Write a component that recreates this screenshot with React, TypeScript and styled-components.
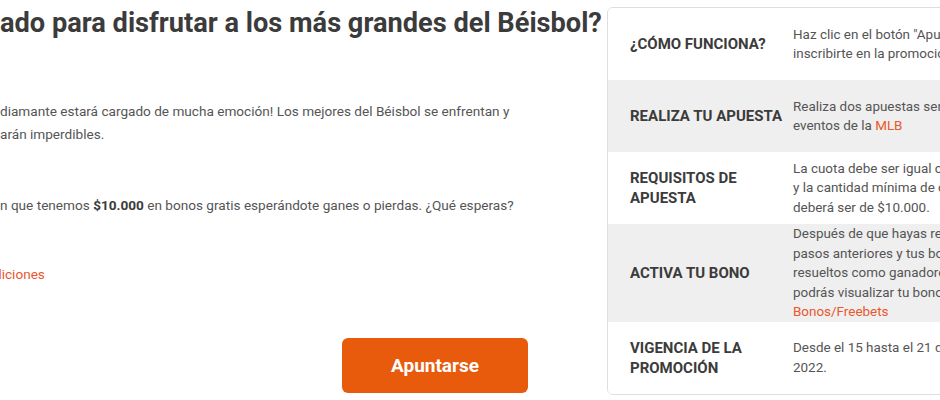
import React from "react";
import styled, { createGlobalStyle } from "styled-components";

const Global = createGlobalStyle`
  html, body {
    margin: 0;
    padding: 0;
    background: #ffffff;
    overflow: hidden;
  }
  body {
    font-family: Roboto, "Liberation Sans", Arial, sans-serif;
    width: 940px;
    height: 400px;
  }
`;

const Page = styled.div`
  display: flex;
  align-items: flex-start;
  gap: 7px;
  width: 1200px;
`;

const Content = styled.div`
  width: 600px;
  flex: none;
  display: flex;
  flex-direction: column;
  padding-top: 9px;
`;

const Title = styled.h1`
  margin: 0;
  font-size: 27.2px;
  line-height: 29px;
  font-weight: 700;
  color: #3b3b3b;
  white-space: nowrap;
`;

const Paragraph = styled.p<{ $top: number; $indent?: number }>`
  margin: ${(p) => p.$top}px 0 0;
  font-size: 13.6px;
  line-height: 23px;
  color: #555555;
  white-space: nowrap;
  text-indent: ${(p) => p.$indent ?? 0}px;

  strong {
    color: #3b3b3b;
    font-weight: 700;
  }
`;

const Link = styled.a`
  color: #e9572d;
  text-decoration: none;
`;

const ButtonRow = styled.div`
  display: flex;
  padding-left: 342px;
  margin-top: 52px;
`;

const Button = styled.button`
  width: 186px;
  height: 55px;
  border: none;
  border-radius: 6px;
  background: #e85a0c;
  color: #ffffff;
  font-family: Roboto, "Liberation Sans", Arial, sans-serif;
  font-size: 19px;
  font-weight: 700;
  cursor: pointer;
`;

const Panel = styled.div`
  flex: none;
  width: 480px;
  margin-top: 7px;
  border: 1px solid #dedede;
  border-radius: 6px;
  overflow: hidden;
  background: #ffffff;
`;

const Row = styled.div<{ $shaded?: boolean }>`
  display: grid;
  grid-template-columns: 185px 1fr;
  align-items: center;
  min-height: 72px;
  background: ${(p) => (p.$shaded ? "#efefef" : "#ffffff")};
`;

const Label = styled.div`
  padding-left: 22px;
  font-size: 15px;
  line-height: 20px;
  font-weight: 700;
  color: #3b3b3b;
  text-transform: uppercase;
`;

const Value = styled.div`
  font-size: 13.45px;
  line-height: 19.5px;
  color: #555555;
  white-space: nowrap;
`;

const rows: { label: React.ReactNode; value: React.ReactNode; shaded?: boolean }[] = [
  {
    label: "¿Cómo funciona?",
    value: (
      <>
        Haz clic en el botón "Apuntarse" para
        <br />
        inscribirte en la promoción.
      </>
    ),
  },
  {
    label: "Realiza tu apuesta",
    shaded: true,
    value: (
      <>
        Realiza dos apuestas sencillas en
        <br />
        eventos de la <Link href="#">MLB</Link>
      </>
    ),
  },
  {
    label: (
      <>
        Requisitos de
        <br />
        apuesta
      </>
    ),
    value: (
      <>
        La cuota debe ser igual o mayor a 1.50
        <br />
        y la cantidad mínima de cada apuesta
        <br />
        deberá ser de $10.000.
      </>
    ),
  },
  {
    label: "Activa tu bono",
    shaded: true,
    value: (
      <>
        Después de que hayas realizado los
        <br />
        pasos anteriores y tus boletos sean
        <br />
        resueltos como ganadores o perdedores,
        <br />
        podrás visualizar tu bono en la sección
        <br />
        <Link href="#">Bonos/Freebets</Link>
      </>
    ),
  },
  {
    label: (
      <>
        Vigencia de la
        <br />
        promoción
      </>
    ),
    value: (
      <>
        Desde el 15 hasta el 21 de agosto de
        <br />
        2022.
      </>
    ),
  },
];

export default function App() {
  return (
    <>
      <Global />
      <Page>
        <Content>
          <Title>ado para disfrutar a los más grandes del Béisbol?</Title>
          <Paragraph $top={62}>
            diamante estará cargado de mucha emoción! Los mejores del Béisbol se enfrentan y
            <br />
            arán imperdibles.
          </Paragraph>
          <Paragraph $top={48}>
            n que tenemos <strong>$10.000</strong> en bonos gratis esperándote ganes o pierdas. ¿Qué esperas?
          </Paragraph>
          <Paragraph $top={46} $indent={-6}>
            <Link href="#">diciones</Link>
          </Paragraph>
          <ButtonRow>
            <Button>Apuntarse</Button>
          </ButtonRow>
        </Content>
        <Panel>
          {rows.map((r, i) => (
            <Row key={i} $shaded={r.shaded}>
              <Label>{r.label}</Label>
              <Value>{r.value}</Value>
            </Row>
          ))}
        </Panel>
      </Page>
    </>
  );
}
